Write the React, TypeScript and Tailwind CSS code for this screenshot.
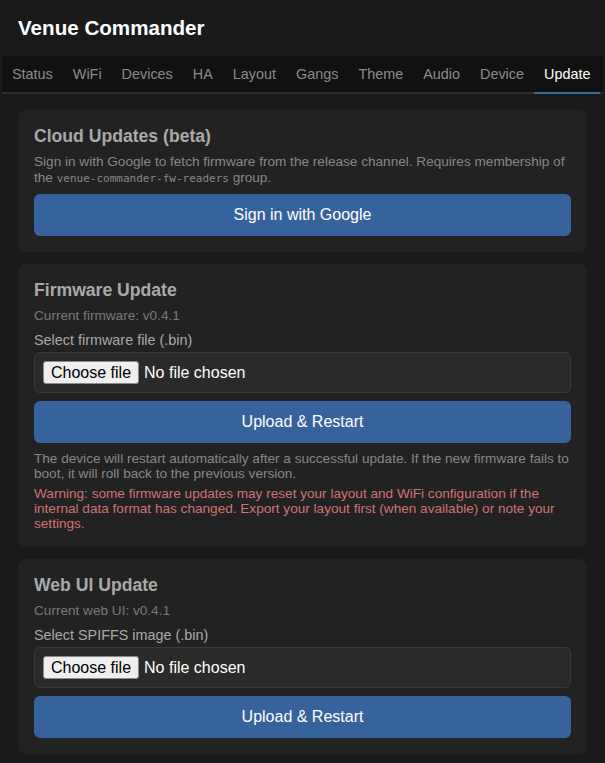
import React from 'react';

const tabs = ['Status', 'WiFi', 'Devices', 'HA', 'Layout', 'Gangs', 'Theme', 'Audio', 'Device', 'Update'];

const FilePicker: React.FC = () => (
  <div className="flex items-center rounded-md border border-[#3a3a3a] bg-[#2a2a2a] p-2">
    <span className="rounded-[3px] border border-[#8a8a8a] bg-[#efefef] px-[7px] text-[16px] leading-[21px] text-black">
      Choose file
    </span>
    <span className="ml-[5px] text-[16px] leading-[21px] text-white">No file chosen</span>
  </div>
);

const PrimaryButton: React.FC<{ label: string }> = ({ label }) => (
  <button className="h-[42px] w-full rounded-md bg-[#36639b] text-[16px] leading-[18px] text-white">
    {label}
  </button>
);

const Card: React.FC<{ title: string; children: React.ReactNode }> = ({ title, children }) => (
  <section className="rounded-lg bg-[#222222] p-4">
    <h3 className="mb-2 text-[17.6px] font-bold leading-[20px] text-[#a9a9a9]">{title}</h3>
    {children}
  </section>
);

export default function App() {
  return (
    <div className="min-h-[763px] bg-[#1a1a1a] font-['Liberation_Sans',Arial,sans-serif]">
      <header className="px-[18px] py-4">
        <h1 className="text-[20.6px] font-bold leading-[24px] text-white">Venue Commander</h1>
      </header>

      <nav className="mx-[2px] flex border-b-2 border-[#2e2e2e] bg-[#111111]">
        {tabs.map((t) => (
          <div
            key={t}
            className={
              t === 'Update'
                ? '-mb-[2px] border-b-2 border-[#3b6aa6] px-[10px] py-[10px] text-[14.4px] leading-[16px] text-white'
                : 'px-[10px] py-[10px] text-[14.4px] leading-[16px] text-[#8c8c8c]'
            }
          >
            {t}
          </div>
        ))}
      </nav>

      <main className="flex flex-col gap-3 px-[18px] pt-4">
        <Card title="Cloud Updates (beta)">
          <p className="mb-2 text-[13.6px] leading-[15.5px] text-[#888888]">
            Sign in with Google to fetch firmware from the release channel. Requires membership of the{' '}
            <code className="font-['DejaVu_Sans_Mono',monospace] text-[11px] leading-[15.5px]">venue-commander-fw-readers</code> group.
          </p>
          <PrimaryButton label="Sign in with Google" />
        </Card>

        <Card title="Firmware Update">
          <p className="text-[13.6px] leading-[15.6px] text-[#7a7a7a]">Current firmware: v0.4.1</p>
          <label className="mb-1 mt-2 block text-[14.4px] leading-[16.6px] text-[#a9a9a9]">
            Select firmware file (.bin)
          </label>
          <FilePicker />
          <div className="mt-2">
            <PrimaryButton label="Upload & Restart" />
          </div>
          <p className="mt-2 text-[13.6px] leading-[15.2px] text-[#888888]">
            The device will restart automatically after a successful update. If the new firmware fails to boot, it
            will roll back to the previous version.
          </p>
          <p className="mt-1 text-[13.6px] leading-[15.2px] text-[#cf7474]">
            Warning: some firmware updates may reset your layout and WiFi configuration if the internal data format
            has changed. Export your layout first (when available) or note your settings.
          </p>
        </Card>

        <Card title="Web UI Update">
          <p className="text-[13.6px] leading-[15.6px] text-[#7a7a7a]">Current web UI: v0.4.1</p>
          <label className="mb-1 mt-2 block text-[14.4px] leading-[16.6px] text-[#a9a9a9]">
            Select SPIFFS image (.bin)
          </label>
          <FilePicker />
          <div className="mt-2">
            <PrimaryButton label="Upload & Restart" />
          </div>
        </Card>
      </main>
    </div>
  );
}
